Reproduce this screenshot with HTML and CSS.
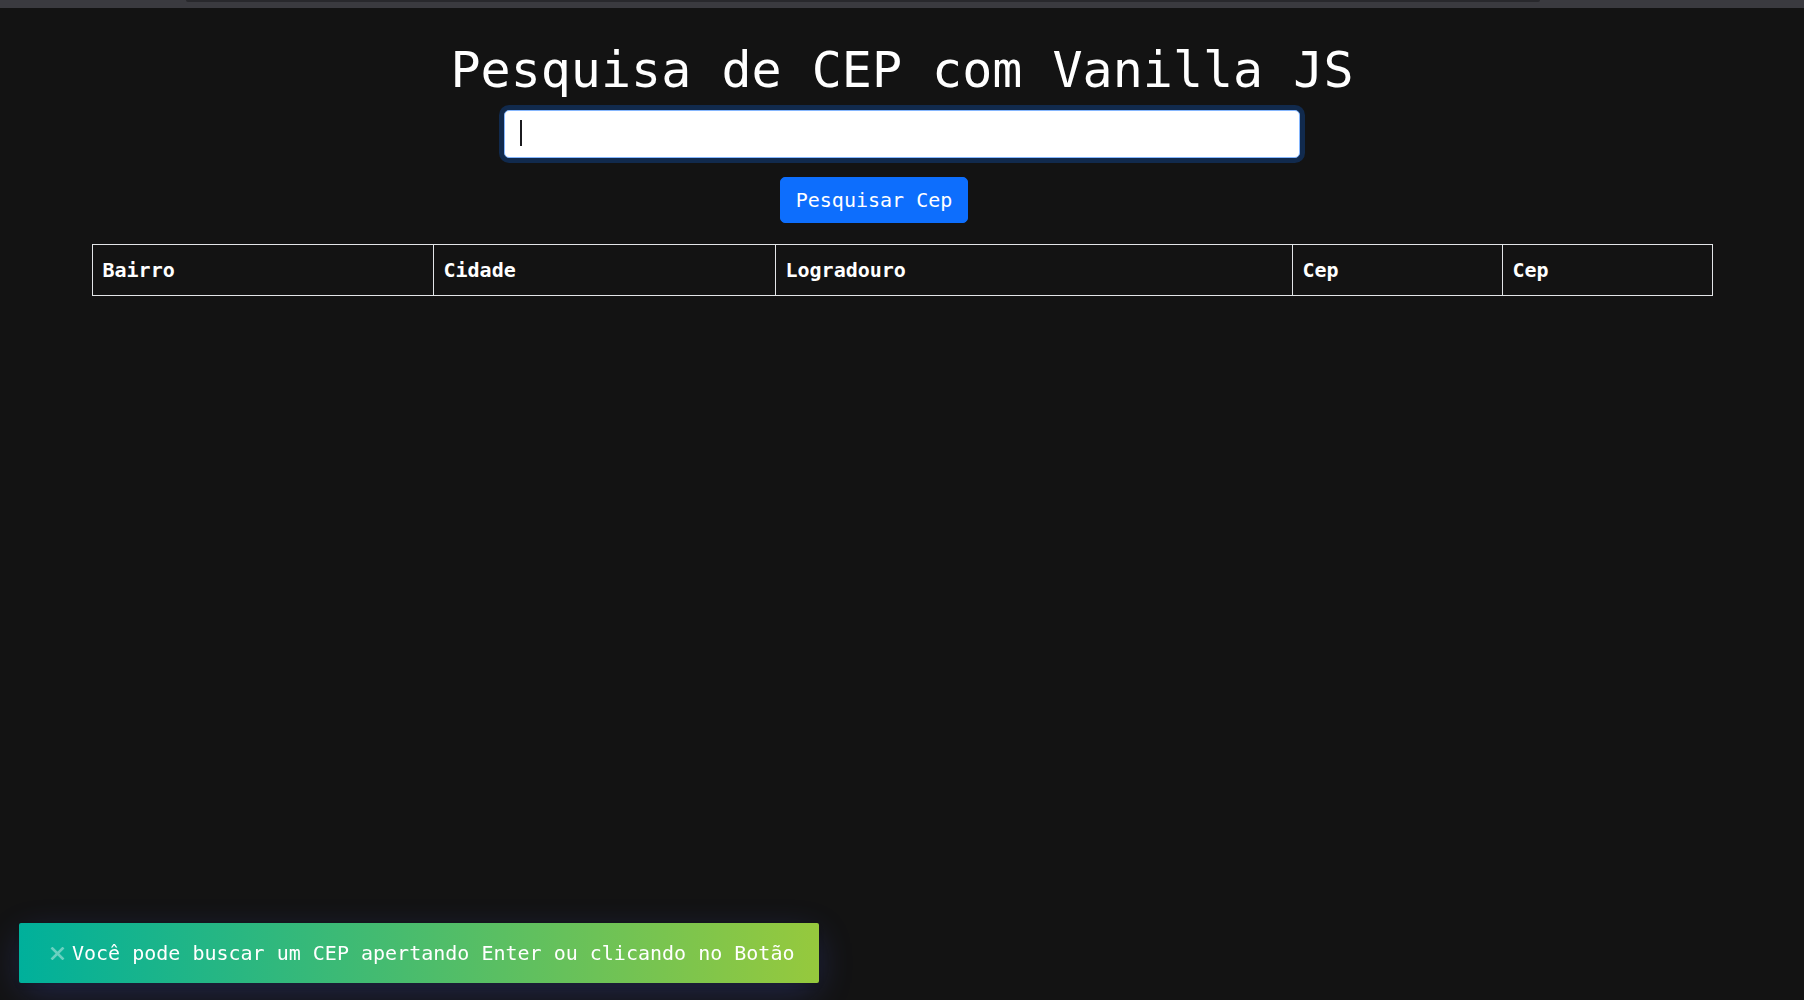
FILE: index.html
```html
<!DOCTYPE html>
<html lang="pt-BR">
<head>
<meta charset="utf-8">
<title>Pesquisa de CEP com Vanilla JS</title>
<link rel="stylesheet" href="styles.css">
</head>
<body>
<div class="topbar"><div class="topbar-thumb"></div></div>
<main class="page">
  <h1 class="title">Pesquisa de CEP com Vanilla JS</h1>
  <div class="field">
    <input class="cep-input" type="text" aria-label="CEP">
    <span class="caret"></span>
  </div>
  <div class="actions">
    <button class="btn-search" type="button">Pesquisar Cep</button>
  </div>
  <table class="results">
    <colgroup>
      <col class="c-bairro"><col class="c-cidade"><col class="c-logradouro"><col class="c-cep"><col class="c-cep">
    </colgroup>
    <thead>
      <tr><th>Bairro</th><th>Cidade</th><th>Logradouro</th><th>Cep</th><th>Cep</th></tr>
    </thead>
    <tbody></tbody>
  </table>
</main>
<div class="toast">
  <span class="toast-close"><svg width="15" height="13" viewBox="0 0 15 13"><path d="M1.5 0.5 L13.5 12.5 M13.5 0.5 L1.5 12.5" stroke="#ffffff" stroke-width="2.6" fill="none"/></svg></span><span class="toast-text">Você pode buscar um CEP apertando Enter ou clicando no Botão</span>
</div>
</body>
</html>
```
FILE: styles.css
```css
* { box-sizing: border-box; }
html, body { margin: 0; padding: 0; }
body {
  background: #131313;
  color: #ffffff;
  font-family: "DejaVu Sans Mono", "Liberation Mono", monospace;
  font-size: 20px;
  line-height: 1.5;
  min-height: 1000px;
}
.topbar {
  height: 8px;
  background: #3a3a3f;
  padding: 0 264px 0 186px;
}
.topbar-thumb {
  height: 2px;
  background: #28282c;
  border-radius: 0 0 3px 3px;
}
.page {
  display: flex;
  flex-direction: column;
  align-items: center;
}
.title {
  margin: 32px 0 10px;
  font-size: 50px;
  font-weight: 400;
  line-height: 60px;
  letter-spacing: 0;
}
.field {
  position: relative;
  width: 796px;
}
.cep-input {
  display: block;
  width: 100%;
  height: 48px;
  padding: 7.5px 15px;
  font: inherit;
  color: #212529;
  background: #ffffff;
  border: 1px solid #86b7fe;
  border-radius: 5px;
  box-shadow: 0 0 0 5px rgba(13, 110, 253, 0.25);
  outline: none;
  caret-color: transparent;
}
.caret {
  position: absolute;
  left: 16px;
  top: 10px;
  width: 2px;
  height: 26px;
  background: #1b1b1f;
}
.actions {
  display: flex;
  justify-content: center;
  margin-top: 19px;
  padding-right: 56px;
}
.btn-search {
  height: 46px;
  padding: 0 15px;
  font: inherit;
  line-height: 30px;
  color: #ffffff;
  background: #0d6efd;
  border: 1px solid #0d6efd;
  border-radius: 5px;
}
.results {
  margin-top: 21px;
  width: 1620px;
  table-layout: fixed;
  border-collapse: collapse;
}
.c-bairro { width: 341px; }
.c-cidade { width: 342px; }
.c-logradouro { width: 517px; }
.c-cep { width: 210px; }
.results th {
  border: 1px solid #e3e5e8;
  padding: 10px;
  text-align: left;
  font-weight: 700;
  line-height: 30px;
  color: #ffffff;
}
.toast {
  position: fixed;
  left: 19px;
  bottom: 17px;
  display: flex;
  align-items: center;
  padding: 15px 25px;
  line-height: 30px;
  color: #ffffff;
  background: linear-gradient(to right, #00b09b, #96c93d);
  border-radius: 2px;
  box-shadow: 0 3px 6px -1px rgba(0, 0, 0, 0.12), 0 10px 36px -4px rgba(77, 96, 232, 0.3);
}
.toast-close {
  display: flex;
  align-items: center;
  padding: 0 7px 0 6px;
  opacity: 0.4;
}
.toast-text { white-space: nowrap; }
```
